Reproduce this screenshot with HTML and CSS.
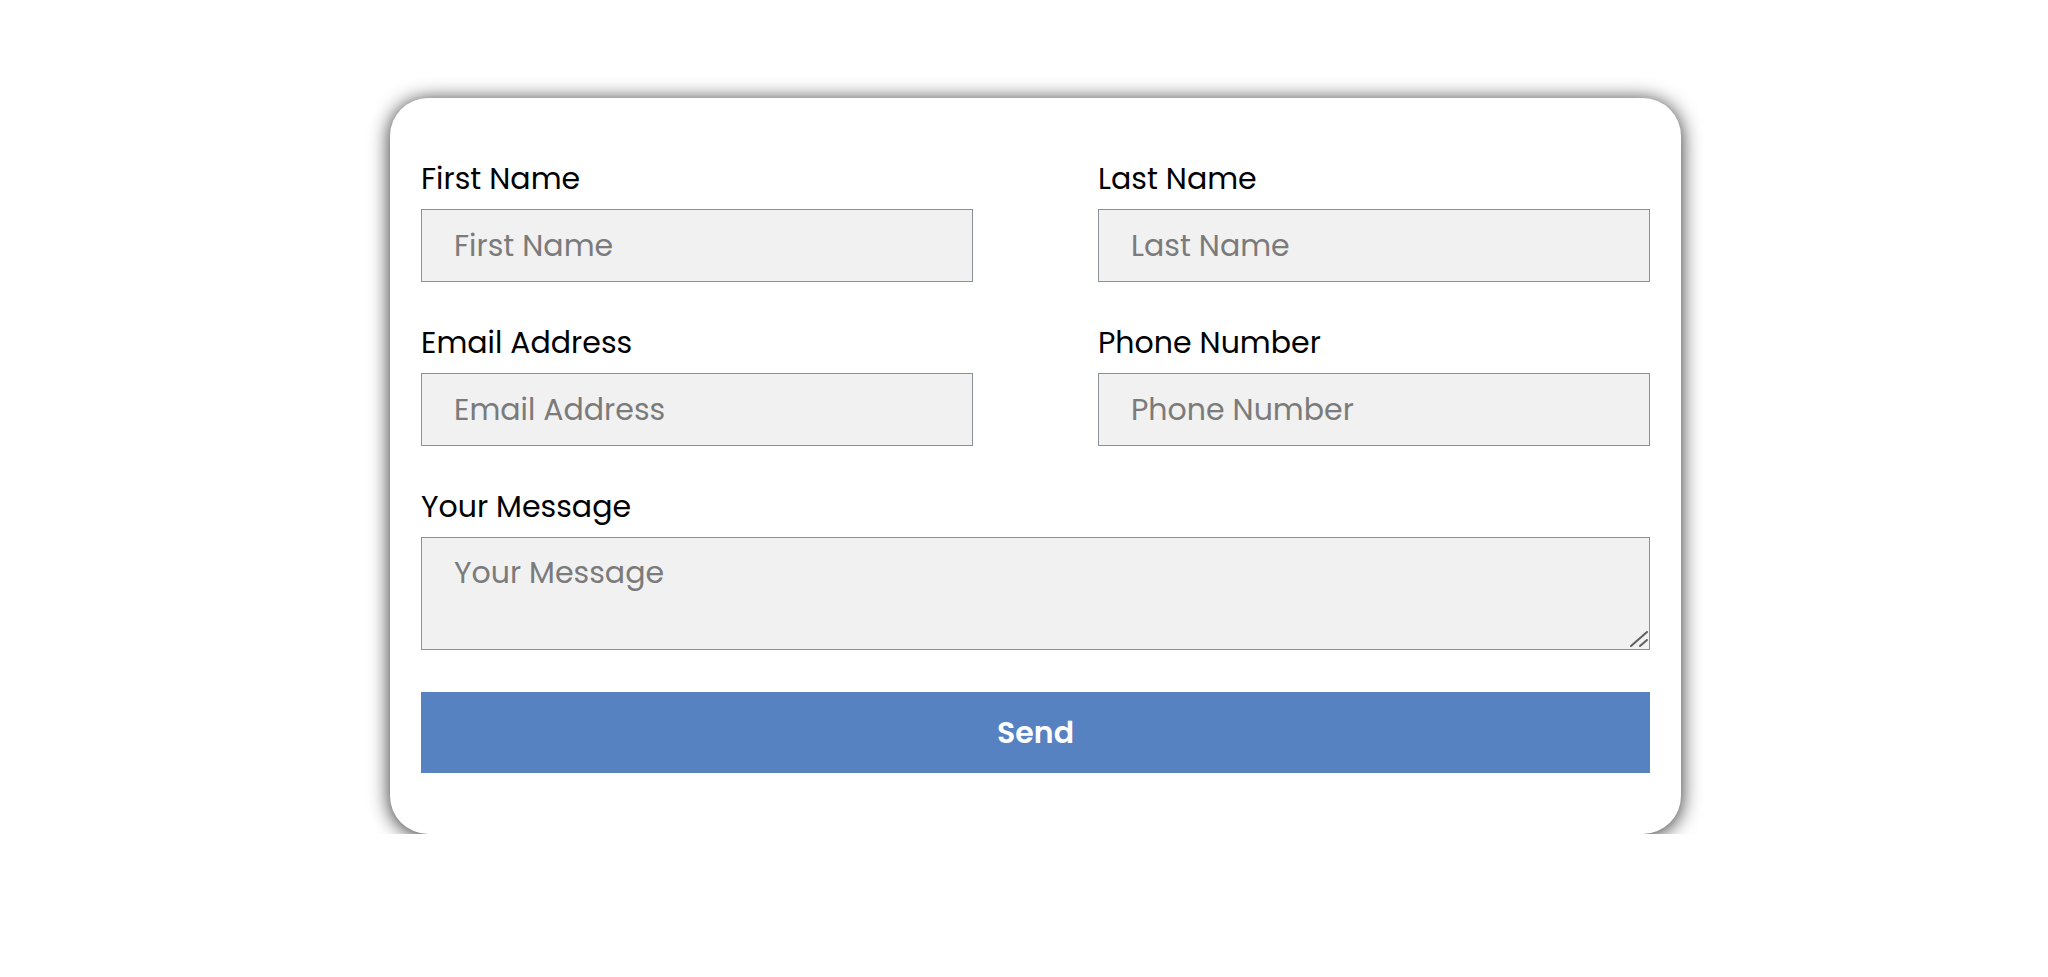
FILE: index.html
```html
<!DOCTYPE html>
<html lang="en">
<head>
    <meta charset="UTF-8">
    <meta name="viewport" content="width=device-width, initial-scale=1.0">
    <title>Contact Form</title>
    <link rel="stylesheet" href="styles.css">
</head>
<body>
    <div class="page">
        <form class="card" onsubmit="return false;">
            <div class="fields">
                <div class="field">
                    <label for="firstName">First Name</label>
                    <input type="text" id="firstName" placeholder="First Name">
                </div>
                <div class="field">
                    <label for="lastName">Last Name</label>
                    <input type="text" id="lastName" placeholder="Last Name">
                </div>
                <div class="field">
                    <label for="email">Email Address</label>
                    <input type="email" id="email" placeholder="Email Address">
                </div>
                <div class="field">
                    <label for="phone">Phone Number</label>
                    <input type="tel" id="phone" placeholder="Phone Number">
                </div>
                <div class="field wide">
                    <label for="message">Your Message</label>
                    <div class="textarea-wrap">
                        <textarea id="message" placeholder="Your Message"></textarea>
                        <svg class="grip" width="20" height="20" viewBox="0 0 20 20">
                            <line x1="2" y1="17" x2="18" y2="3"></line>
                            <line x1="11" y1="17" x2="18" y2="11"></line>
                        </svg>
                    </div>
                </div>
            </div>
            <button type="submit" class="send">Send</button>
        </form>
    </div>
</body>
</html>
```

FILE: styles.css
```css
body {
    margin: 0;
    padding: 0;
    background: #fff;
    font-family: Poppins, "DejaVu Sans", sans-serif;
    color: #000;
}
.page {
    display: flex;
    justify-content: center;
    padding: 98px 0 0 23px;
}
.card {
    width: 1291px;
    box-sizing: border-box;
    padding: 61px 31px 61px 31px;
    background: #fff;
    border-radius: 38px;
    box-shadow: 0 2px 20px rgba(0, 0, 0, 0.85);
}
.fields {
    display: grid;
    grid-template-columns: 1fr 1fr;
    column-gap: 125px;
    row-gap: 41px;
}
.field {
    display: flex;
    flex-direction: column;
    gap: 10px;
}
.field.wide {
    grid-column: 1 / 3;
}
label {
    display: block;
    font-size: 30px;
    line-height: 40px;
}
input,
textarea {
    box-sizing: border-box;
    display: block;
    width: 100%;
    margin: 0;
    padding: 0 32px;
    border: 1px solid #8a9099;
    border-radius: 0;
    background: #f1f1f1;
    font-family: Poppins, "DejaVu Sans", sans-serif;
    font-size: 30px;
    color: #333;
    outline: none;
}
input {
    height: 73px;
}
.textarea-wrap {
    position: relative;
}
textarea {
    height: 113px;
    padding-top: 15px;
    line-height: 40px;
    resize: none;
}
.grip {
    position: absolute;
    right: 1px;
    bottom: 1px;
    stroke: #5f5f5f;
    stroke-width: 2;
    stroke-linecap: round;
    pointer-events: none;
}
input::placeholder,
textarea::placeholder {
    color: #7b7b7b;
}
.send {
    display: block;
    width: 100%;
    height: 81px;
    margin-top: 42px;
    border: none;
    background-color: #5682c1;
    color: #fff;
    font-family: Poppins, "DejaVu Sans", sans-serif;
    font-size: 30px;
    font-weight: 600;
    cursor: pointer;
}
.send:hover {
    background-color: #4d77b4;
}
```
